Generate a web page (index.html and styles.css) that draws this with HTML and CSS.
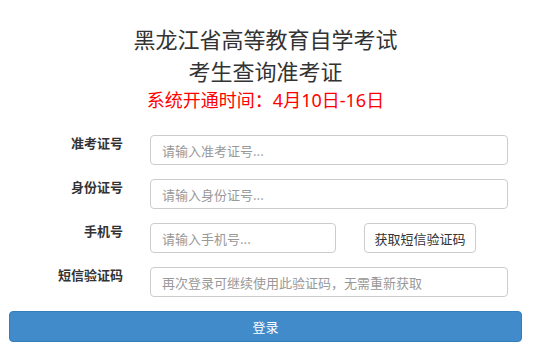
FILE: index.html
```html
<!DOCTYPE html>
<html lang="zh-CN">
<head>
    <meta charset="UTF-8">
    <meta name="viewport" content="width=device-width, initial-scale=1.0">
    <title>考生查询准考证</title>
    <link rel="stylesheet" href="styles.css">
</head>
<body>
    <div class="container">
        <header>
            <h1>黑龙江省高等教育自学考试<br>考生查询准考证</h1>
            <p class="notice">系统开通时间：4月10日-16日</p>
        </header>

        <form>
            <div class="form-row">
                <label for="zkzh">准考证号</label>
                <input type="text" id="zkzh" class="wide" placeholder="请输入准考证号...">
            </div>

            <div class="form-row">
                <label for="sfzh">身份证号</label>
                <input type="text" id="sfzh" class="wide" placeholder="请输入身份证号...">
            </div>

            <div class="form-row">
                <label for="sjh">手机号</label>
                <input type="text" id="sjh" class="short" placeholder="请输入手机号...">
                <button type="button" class="code-btn">获取短信验证码</button>
            </div>

            <div class="form-row">
                <label for="yzm">短信验证码</label>
                <input type="text" id="yzm" class="wide" placeholder="再次登录可继续使用此验证码，无需重新获取">
            </div>

            <button type="button" class="login-btn">登录</button>
        </form>
    </div>
</body>
</html>
```

FILE: styles.css
```css
/* General Reset */
* {
    margin: 0;
    padding: 0;
    box-sizing: border-box;
}

body {
    font-family: "Noto Sans", "Noto Sans CJK SC", sans-serif;
    background-color: #fff;
    color: #333;
}

.container {
    width: 513px;
    margin-left: 9px;
}

header {
    text-align: center;
    padding-top: 22px;
}

header h1 {
    font-family: "Noto Sans CJK SC", sans-serif;
    font-size: 22px;
    font-weight: 400;
    line-height: 32px;
    color: #333;
}

.notice {
    font-size: 18px;
    line-height: 26px;
    margin-top: 1px;
    color: #f00;
}

form {
    margin-top: 22px;
}

.form-row {
    display: flex;
    align-items: flex-start;
    margin-bottom: 14px;
}

.form-row label {
    width: 114px;
    flex-shrink: 0;
    margin-right: 27px;
    text-align: right;
    font-family: "Noto Sans CJK SC", sans-serif;
    font-size: 13px;
    font-weight: 700;
    line-height: 16px;
    color: #333;
}

input {
    height: 30px;
    padding: 0 11px;
    border: 1px solid #ccc;
    border-radius: 4px;
    font-family: "Noto Sans CJK SC", sans-serif;
    font-size: 13px;
    color: #555;
    outline: none;
}

input::placeholder {
    color: #999;
}

input.wide {
    width: 358px;
}

input.short {
    width: 186px;
}

.code-btn {
    width: 112px;
    height: 30px;
    margin-left: 28px;
    background: #fff;
    border: 1px solid #ccc;
    border-radius: 4px;
    font-family: "Noto Sans CJK SC", sans-serif;
    font-size: 13px;
    color: #333;
    cursor: pointer;
}

.login-btn {
    display: block;
    width: 100%;
    height: 31px;
    margin-top: 0;
    background: #428bca;
    border: 1px solid #357ebd;
    border-radius: 4px;
    font-family: "Noto Sans CJK SC", sans-serif;
    font-size: 13px;
    color: #fff;
    cursor: pointer;
}

.login-btn:hover {
    background: #3276b1;
}
```
